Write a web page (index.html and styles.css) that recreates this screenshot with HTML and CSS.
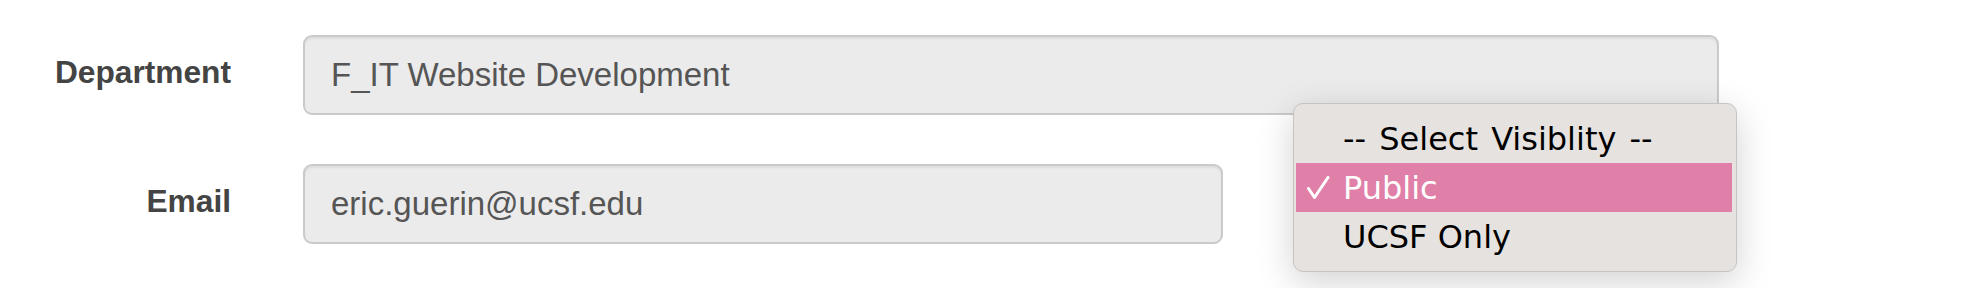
FILE: index.html
```html
<!DOCTYPE html>
<html lang="en">
<head>
<meta charset="utf-8">
<title>Profile form</title>
<link rel="stylesheet" href="styles.css">
</head>
<body>
<form class="form">
  <div class="row">
    <label class="label" for="dept">Department</label>
    <input class="control control-wide" id="dept" type="text" value="F_IT Website Development" readonly>
  </div>
  <div class="row">
    <label class="label" for="email">Email</label>
    <input class="control control-email" id="email" type="text" value="eric.guerin@ucsf.edu" readonly>
  </div>
</form>
<div class="menu">
  <div class="menu-item placeholder">-- Select Visiblity --</div>
  <div class="menu-item selected">
    <svg class="check" viewBox="0 0 24 24" width="24" height="24" aria-hidden="true"><path d="M2.5 12.5 L8.5 21.5 L22 1.5" fill="none" stroke="#ffffff" stroke-width="3" stroke-linecap="round" stroke-linejoin="round"/></svg>
    Public
  </div>
  <div class="menu-item">UCSF Only</div>
</div>
</body>
</html>
```

FILE: styles.css
```css
html, body {
  margin: 0;
  padding: 0;
  background: #ffffff;
}

body {
  width: 1970px;
  height: 288px;
  position: relative;
  overflow: hidden;
  font-family: "Liberation Sans", Arial, sans-serif;
}

.form {
  margin: 0;
  padding-top: 35px;
  display: flex;
  flex-direction: column;
  gap: 49px;
}

.row {
  display: grid;
  grid-template-columns: 231px auto;
  column-gap: 72px;
  align-items: start;
}

.label {
  text-align: right;
  font-weight: bold;
  font-size: 31.7px;
  line-height: 34px;
  padding-top: 20px;
  color: #444444;
}

.control {
  box-sizing: border-box;
  height: 80px;
  margin: 0;
  padding: 0 26px;
  border: 2px solid #cacaca;
  border-radius: 9px;
  background: #ebebeb;
  box-shadow: inset 0 2px 2px rgba(0, 0, 0, 0.06);
  font-family: "Liberation Sans", Arial, sans-serif;
  font-size: 33px;
  color: #555555;
  outline: none;
}

.control-wide {
  width: 1416px;
}

.control-email {
  width: 920px;
}

.menu {
  position: absolute;
  left: 1293px;
  top: 103px;
  width: 444px;
  box-sizing: border-box;
  padding: 10px 4px 10px 2px;
  border: 1px solid #c6c4c2;
  border-radius: 10px;
  background: #e6e2df;
  box-shadow: 0 10px 36px rgba(0, 0, 0, 0.18);
  font-family: "DejaVu Sans", "Liberation Sans", sans-serif;
  font-size: 32px;
  color: #000000;
}

.menu-item {
  position: relative;
  height: 49px;
  line-height: 49px;
  padding-left: 47px;
  padding-top: 1px;
  box-sizing: border-box;
  white-space: nowrap;
}

.menu-item.placeholder {
  word-spacing: 3px;
}

.menu-item.selected {
  background: #e07fa8;
  color: #ffffff;
}

.check {
  position: absolute;
  left: 10px;
  top: 13px;
}
```
